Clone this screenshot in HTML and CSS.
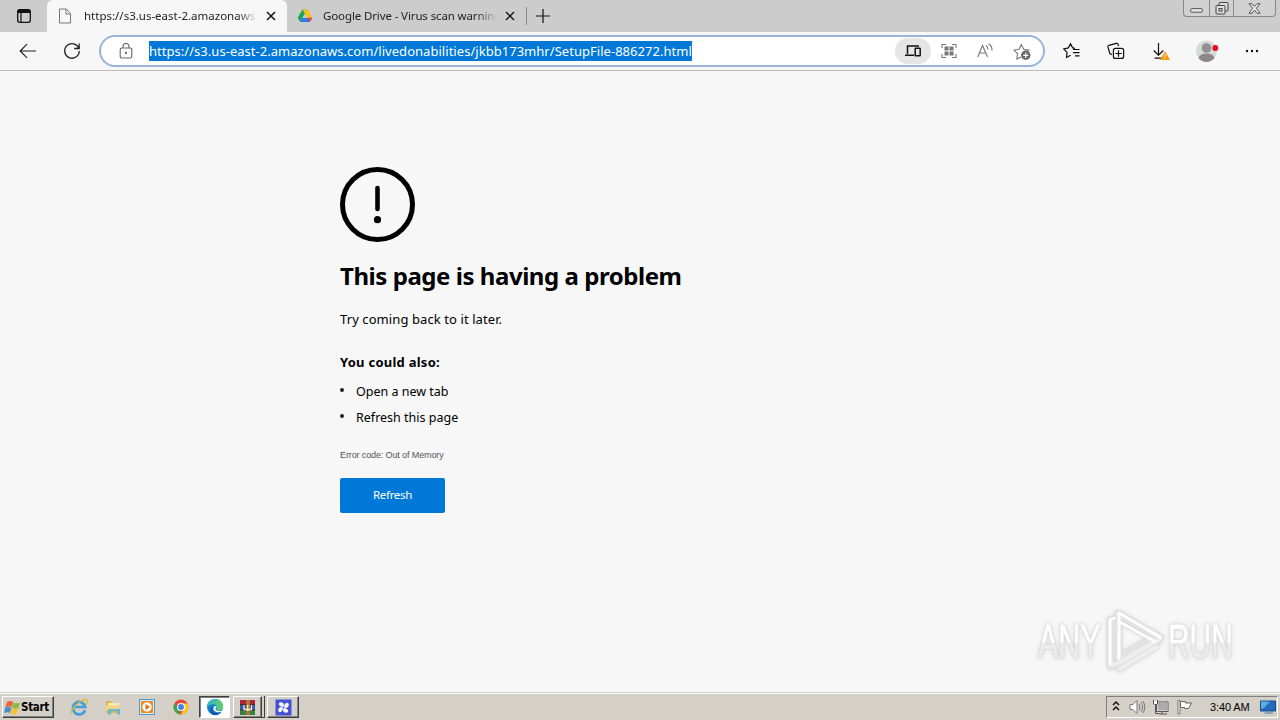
FILE: index.html
```html
<!DOCTYPE html>
<html lang="en">
<head>
    <meta charset="UTF-8">
    <meta name="viewport" content="width=device-width, initial-scale=1.0">
    <title>This page is having a problem</title>
    <link rel="stylesheet" href="styles.css">
</head>
<body>
    <header class="tab-bar">
        <div class="tab-actions">
            <svg width="16" height="16" viewBox="0 0 16 16"><rect x="1.7" y="1.7" width="12.6" height="12.6" rx="2" fill="none" stroke="#111" stroke-width="1.3"/><path d="M1.5 5V3.5a2 2 0 0 1 2-2h9a2 2 0 0 1 2 2V5z" fill="#111"/><path d="M5 5v9" stroke="#111" stroke-width="1.2"/></svg>
        </div>
        <div class="tab active">
            <svg class="tab-icon" width="16" height="16" viewBox="0 0 16 16" fill="none" stroke="#777" stroke-width="1"><path d="M2.5 1h6.8l4.2 4.5V15h-11zM9 1v5h4.5"/></svg>
            <span class="tab-title first-title">https://s3.us-east-2.amazonaws.c</span>
            <svg class="close" width="10" height="10" viewBox="0 0 10 10"><path d="M1 1l8 8M9 1L1 9" stroke="#111" stroke-width="1.5"/></svg>
        </div>
        <div class="tab">
            <svg class="tab-icon" width="16" height="16" viewBox="0 0 16 16"><path d="M5.4 1.5h5L8 5.8 3.2 14 .7 9.8z" fill="#19a65b"/><path d="M5.4 1.5h5l4.9 8.3h-5z" fill="#fbc114"/><path d="M3.2 14l2.4-4.2h9.7L12.8 14z" fill="#3478e5"/><path d="M10.3 9.8h5L12.8 14z" fill="#e74832"/><path d="M8 5.8l2.3 4H5.6z" fill="#ccc"/></svg>
            <span class="tab-title second-title">Google Drive - Virus scan warning</span>
            <svg class="close" width="10" height="10" viewBox="0 0 10 10"><path d="M1 1l8 8M9 1L1 9" stroke="#111" stroke-width="1.3"/></svg>
        </div>
        <div class="new-tab">
            <svg width="14" height="14" viewBox="0 0 14 14"><path d="M7 0v14M0 7h14" stroke="#111" stroke-width="1.2"/></svg>
        </div>
        <div class="window-buttons">
            <div class="win-min"><svg width="13" height="5" viewBox="0 0 13 5"><rect x=".6" y=".6" width="11.8" height="3.6" rx="1.2" fill="#e5e5e5" stroke="#555"/></svg></div>
            <div class="win-max"><svg width="14" height="13" viewBox="0 0 14 13" fill="#ddd" stroke="#444"><rect x="4" y=".5" width="9" height="8.5" rx="1"/><rect x="1" y="3.5" width="9" height="8.5" rx="1"/><rect x="4" y="6.5" width="3" height="2.5"/></svg></div>
            <div class="win-close"><svg width="13" height="11" viewBox="0 0 13 11"><path d="M1 .7h3l2.5 2.7L9 .7h3L8.4 5.3l3.6 5H9L6.5 7.2 4 10.3H1l3.6-5z" fill="#e5e5e5" stroke="#555"/></svg></div>
        </div>
    </header>

    <nav class="toolbar">
        <svg class="back" width="18" height="16" viewBox="0 0 18 16" fill="none" stroke="#222" stroke-width="1.2"><path d="M17 8H1.5M8 1.2L1.2 8 8 14.8"/></svg>
        <svg class="reload" width="18" height="18" viewBox="0 0 18 18" fill="none" stroke="#222" stroke-width="1.3"><path d="M15.9 6.5A7.3 7.3 0 1 0 16.3 9M16.2 1.5v5h-5"/></svg>
        <div class="address">
            <svg class="lock" width="14" height="16" viewBox="0 0 14 16" fill="none" stroke="#666" stroke-width="1.1"><rect x="1.2" y="5" width="11.6" height="10" rx="1.6"/><path d="M4 5V3.4a3 3 0 0 1 6 0V5"/><circle cx="7" cy="10" r=".6" fill="#555"/></svg>
            <span class="url">https://s3.us-east-2.amazonaws.com/livedonabilities/jkbb173mhr/SetupFile-886272.html</span>
            <div class="address-icons">
                <span class="device-pill"><svg width="16" height="12" viewBox="0 0 16 12" fill="none" stroke="#111" stroke-width="1.5"><path d="M14 1H2.5v8M0 10.3h9"/><rect x="10.2" y="3.2" width="5" height="7.5" rx=".5"/></svg></span>
                <svg width="16" height="16" viewBox="0 0 16 16"><path d="M1 5V1.5h4M11 1.5h4V5M15 11v3.5h-4M5 14.5H1V11" fill="none" stroke="#777" stroke-width="1.1"/><path d="M3.5 3.5h4v4h-4zm5 0h4v4h-4zm-5 5h4v4h-4zm5 0h4v4h-4z" fill="#777"/></svg>
                <svg width="16" height="16" viewBox="0 0 16 16" fill="none" stroke="#777" stroke-width="1.1"><path d="M.8 14L5.5 2.5 10.5 14M2.5 10h6.3M9 2.5q2 1.5 2 4M11.5.8q3.8 2.4 3.5 6.7"/></svg>
                <svg width="18" height="17" viewBox="0 0 18 17"><path d="M8.3 14l-4.5 2 .8-5.2L1 7.1l5-.8L8.3 1.5l2.3 4.8 5.2.8-1.5 1.7" fill="none" stroke="#777" stroke-width="1.1"/><circle cx="12.8" cy="12.3" r="4.7" fill="#686868"/><path d="M12.8 9.7v5.2M10.2 12.3h5.2" stroke="#fff" stroke-width="1.2"/></svg>
            </div>
        </div>
        <div class="tools">
            <svg width="18" height="18" viewBox="0 0 18 18" fill="none" stroke="#111" stroke-width="1.2"><path d="M12 6.3l-2.3-.4L7.5 1.7 5.3 5.9.8 7l3.3 3.4-.6 5.1 4.2-2.2M10 7.5h6.5M10 10.7h6.5M12 13.8h4.5"/></svg>
            <svg width="18" height="18" viewBox="0 0 18 18" fill="none" stroke="#111" stroke-width="1.2"><path d="M4.8 12.6L2.8 11.5 1 5.1q-.4-1.3 1-1.8L9 1.4q1.6-.4 2.1 1L11.6 4"/><rect x="6.4" y="6.4" width="10.2" height="10" rx="2"/><path d="M11.5 8.3v6.4M8.3 11.5h6.4"/></svg>
            <svg width="20" height="20" viewBox="0 0 20 20"><path d="M8.5 2v12M3.7 9.5l4.8 4.7 4.8-4.7M4.5 17.2h7" fill="none" stroke="#111" stroke-width="1.2"/><path d="M15 11l4.3 7.5h-8.6z" fill="#f59a0c" stroke="#f59a0c" stroke-linejoin="round"/><path d="M15 13v3M15 17v1" stroke="#fff4d0" stroke-width="1"/></svg>
            <svg width="24" height="22" viewBox="0 0 24 22"><circle cx="10.5" cy="11" r="10.5" fill="#d5dad7"/><circle cx="10.5" cy="8" r="4.8" fill="#929090"/><path d="M2.5 18.3q1-4.8 8-4.8t8 4.8Q15 22 10.5 22t-8-3.7z" fill="#898787"/><circle cx="19.3" cy="8" r="3" fill="#df1020"/></svg>
            <svg width="14" height="4" viewBox="0 0 14 4" fill="#111"><circle cx="2" cy="2" r="1.2"/><circle cx="7" cy="2" r="1.2"/><circle cx="12" cy="2" r="1.2"/></svg>
        </div>
    </nav>

    <main class="page">
        <section class="error">
            <svg class="error-icon" width="75" height="75" viewBox="0 0 75 75"><circle cx="37.5" cy="37.5" r="35" fill="none" stroke="#000" stroke-width="5"/><path d="M37.5 21v21" stroke="#000" stroke-width="4.6" stroke-linecap="round"/><circle cx="37.5" cy="52.7" r="3.6"/></svg>
            <h1>This page is having a problem</h1>
            <p class="hint">Try coming back to it later.</p>
            <h2>You could also:</h2>
            <ul>
                <li>Open a new tab</li>
                <li>Refresh this page</li>
            </ul>
            <p class="code">Error code: Out of Memory</p>
            <button class="refresh">Refresh</button>
        </section>
        <div class="watermark">
            <span class="any">ANY</span>
            <svg width="60" height="66" viewBox="0 0 60 66" fill="none" stroke-linejoin="round" stroke-linecap="round"><path d="M13 6l42 24L15 60M13 6v44l38-21M6 12v46" stroke="#e2e2e2" stroke-width="7"/><path d="M6 56l4 1 45-26M15 61l37-22" stroke="#eee" stroke-width="4"/><path d="M9 10l-4 2v44M14 50V5l41 24M15 14l34 19" stroke="#fff" stroke-width="3"/></svg>
            <span class="run">RUN</span>
        </div>
    </main>

    <footer class="taskbar">
        <div class="start">
            <svg width="17" height="15" viewBox="0 0 17 15"><path d="M3 2q3-2 6 0L7.6 7Q5 5.5 1.5 7z" fill="#e96432"/><path d="M9.4 2.5q3 1.7 6.6 0L14.5 8q-3 1.5-6.5-.5z" fill="#8abb42"/><path d="M1.2 7.5q3-1.6 6.2.2L5.9 13Q3 11.5 0 13z" fill="#4b8cce"/><path d="M7.7 8.1q3 1.7 6.5.6l-1.5 5.2q-3 1.3-6.4-.4z" fill="#f5c139"/></svg>
            <span>Start</span>
        </div>
        <div class="launchers">
            <svg width="18" height="18" viewBox="0 0 18 18" fill="none"><path d="M15 12.2A6.2 6.2 0 1 1 15.2 9H4" stroke="#3d9fdb" stroke-width="2.7"/><path d="M2 16.3Q-1 14 6 7.2T16.5 2q2 1-.7 4.8" stroke="#e5b72f" stroke-width="1.3"/></svg>
            <svg width="18" height="18" viewBox="0 0 18 18"><path d="M2 3h5l1 2h7v10H2z" fill="#dfb64e"/><path d="M4 5h11v7H4z" fill="#f7edb4"/><path d="M1.5 7.5H15V13H1.5z" fill="#f3d780"/><path d="M4 16.5V11h12v5.5h-3V13H7v3.5z" fill="#68b7d6"/></svg>
            <svg width="18" height="18" viewBox="0 0 18 18"><rect x="1.5" y="1.5" width="15" height="15" fill="#d9ecf8" stroke="#4e98cf"/><rect x="3" y="3" width="12" height="12" rx="1" fill="#f28a18"/><circle cx="9" cy="9" r="4.7" fill="#fff"/><path d="M7.5 6l4.5 3-4.5 3z" fill="#e76c10"/></svg>
            <svg width="18" height="18" viewBox="0 0 18 18"><circle cx="9" cy="9" r="7.5" fill="#e84537"/><path d="M2.5 5.2L7 13l1.5 3.5A7.5 7.5 0 0 1 2.5 5.2z" fill="#35a853"/><path d="M9 5.5h6.6A7.5 7.5 0 0 1 8.5 16.5L12.2 11z" fill="#fcc91c"/><circle cx="9" cy="9" r="4" fill="#fff"/><circle cx="9" cy="9" r="3" fill="#4285ea"/></svg>
        </div>
        <div class="task task-active">
            <svg width="18" height="18" viewBox="0 0 18 18"><circle cx="9" cy="9" r="8" fill="#1683cf"/><path d="M1.3 7A8 8 0 0 1 17 8.8q0 3.7-4.4 3.7-2.6 0-1.8-1.8 1-4.2-4.3-4.4Q3 6.2 1.3 9z" fill="#3fbdb0"/><path d="M12 1.6A8 8 0 0 1 17 8.8q0 3.7-4.4 3.7-2.6 0-1.8-1.8 1.4-4-1.8-6z" fill="#58cc76"/><path d="M6.4 8Q5 13.5 10 15q3.3.8 5.6-1.2A8 8 0 0 1 6 16.4Q2.5 12 6.4 8z" fill="#1656a8"/><path d="M10.7 8.5Q9 10.8 9.8 12q2.2 2 6.7.2l-.8 1.4Q10.5 15.3 8 12.5 6.6 9.5 9 8z" fill="#fff"/></svg>
        </div>
        <div class="task task-stacked">
            <svg width="17" height="17" viewBox="0 0 17 17"><path d="M1 1h15v5H1z" fill="#b32234"/><path d="M1 6h15v5H1z" fill="#365ea8"/><path d="M1 11h15v5H1z" fill="#358247"/><path d="M1 5.8h15M1 11h15" stroke="#382830"/><path d="M7 1h4v15H7z" fill="#a87835"/><path d="M5 6v4.5h7.5V6M8.7 6v6" fill="none" stroke="#f5e9cf" stroke-width="1.3"/></svg>
        </div>
        <div class="stack-edge"></div>
        <div class="task">
            <svg width="17" height="17" viewBox="0 0 17 17"><path d="M.5.5h16v16H.5z" fill="#4450d5"/><g fill="#f4f5ff"><ellipse cx="6.4" cy="5.4" rx="2.7" ry="2" transform="rotate(25 6.4 5.4)"/><ellipse cx="11.6" cy="6.4" rx="2" ry="2.7" transform="rotate(25 11.6 6.4)"/><ellipse cx="10.6" cy="11.6" rx="2.7" ry="2" transform="rotate(25 10.6 11.6)"/><ellipse cx="5.4" cy="10.6" rx="2" ry="2.7" transform="rotate(25 5.4 10.6)"/><circle cx="8.5" cy="8.5" r="2.2"/></g><circle cx="8.5" cy="8.5" r="1.1" fill="#4450d5"/></svg>
        </div>
        <div class="tray">
            <svg class="chevrons" width="8" height="12" viewBox="0 0 8 12" fill="none" stroke="#111" stroke-width="1.5"><path d="M1 5l3-3 3 3M1 10l3-3 3 3"/></svg>
            <svg class="speaker" width="18" height="16" viewBox="0 0 18 16" fill="none" stroke="#777"><path d="M1 5.5h3l4-4v13l-4-4H1z" fill="#fff"/><path d="M10 5q2 3 0 6M12 3.2q3.2 4.8 0 9.6M14 2q3.6 6 0 12"/></svg>
            <svg class="network" width="17" height="16" viewBox="0 0 17 16"><path d="M5 3.5h10.5v8.5H5z" fill="#aaa" stroke="#fff"/><path d="M4.5 3h11.5v9.5H4.5zM7 15h8M10 12.5V15M1.5 1v4h4V1M3.5 5v9.5H7" fill="none" stroke="#555"/><path d="M2 2h3v3H2z" fill="#fff"/></svg>
            <svg class="flag" width="17" height="16" viewBox="0 0 17 16"><path d="M2 1.5h2V15H2z" fill="#fff" stroke="#777"/><path d="M4.5 2.5h5v1.5h6l-3 5.5H8.5v-1h-4z" fill="#fff" stroke="#666"/></svg>
            <span class="clock">3:40 AM</span>
            <svg class="show-desktop" width="16" height="15" viewBox="0 0 16 15"><path d="M.5 1h15v10H.5z" fill="#216cbd" stroke="#164d8b"/><path d="M1 1.5h9L4 8l-3 1z" fill="#5cacdf"/><path d="M5 12h7l2 2H4z" fill="#8ca4b8"/></svg>
        </div>
    </footer>
</body>
</html>
```
FILE: styles.css
```css
* {
    box-sizing: border-box;
}

body {
    margin: 0;
    width: 1280px;
    height: 720px;
    overflow: hidden;
    display: flex;
    flex-direction: column;
    background: #f7f7f7;
    color: #000;
    font-family: "Noto Sans", "Open Sans", sans-serif;
}

svg {
    display: block;
    flex: none;
}

h1, h2, p, ul {
    margin: 0;
    padding: 0;
}

/* tabs */
.tab-bar {
    height: 32px;
    display: flex;
    background: #ccc;
    white-space: nowrap;
}

.tab-actions {
    width: 47px;
    padding: 8px 0 0 16px;
}

.tab {
    display: flex;
    width: 239px;
    padding: 8px 0 0 10px;
}

.tab.active {
    width: 240px;
    background: #f7f7f7;
    border-radius: 6px 6px 0 0;
}

.tab-title {
    width: 174px;
    margin-left: 10px;
    overflow: hidden;
    color: #222;
    font-size: 11.5px;
    line-height: 16px;
    -webkit-mask-image: linear-gradient(to right, #000 88%, transparent);
    mask-image: linear-gradient(to right, #000 88%, transparent);
}

.first-title {
    margin-left: 11px;
}

.second-title {
    letter-spacing: -0.12px;
}

.close {
    margin: 3px 0 0 8px;
}

.new-tab {
    height: 18px;
    margin-top: 7px;
    padding: 2px 0 0 9px;
    border-left: 1px solid #888;
}

.window-buttons {
    display: flex;
    width: 93px;
    height: 17px;
    margin: 0 4px 0 auto;
    border: 1px solid #888;
    border-top: 0;
    border-radius: 0 0 4px 4px;
    background: #d1d1d1;
}

.win-min {
    width: 25px;
    padding: 8px 0 0 6px;
}

.win-max {
    width: 25px;
    padding: 2px 0 0 5px;
    border-left: 1px solid #888;
    border-right: 1px solid #888;
}

.win-close {
    padding: 3px 0 0 14px;
}

/* toolbar */
.toolbar {
    height: 39px;
    display: flex;
    align-items: center;
    background: #f7f7f7;
    border-bottom: 1px solid #bbb;
}

.back {
    margin-left: 19px;
}

.reload {
    margin-left: 26px;
}

.address {
    display: flex;
    align-items: center;
    width: 946px;
    height: 32px;
    margin-left: 18px;
    border: 2px solid #98b3dc;
    border-radius: 16px;
    background: #fff;
}

.lock {
    margin-left: 18px;
}

.url {
    height: 20px;
    margin-left: 16px;
    background: #0078d7;
    color: #fff;
    font-size: 13px;
    letter-spacing: 0.035px;
    line-height: 20px;
    white-space: nowrap;
}

.address-icons {
    display: flex;
    align-items: center;
    gap: 20px;
    margin: 0 12px 0 auto;
}

.device-pill {
    display: flex;
    align-items: center;
    justify-content: center;
    width: 36px;
    height: 26px;
    margin-right: -10px;
    border-radius: 13px;
    background: #e5e5e5;
}

.tools {
    display: flex;
    align-items: center;
    gap: 25.5px;
    margin-left: 18px;
}

/* error page */
.page {
    flex: 1;
    display: flex;
    justify-content: space-between;
    align-items: flex-start;
    padding: 96px 47px 0 340px;
}

.error {
    white-space: nowrap;
}

h1 {
    margin-top: 16px;
    font-size: 24px;
    letter-spacing: -0.45px;
    line-height: 36px;
}

.hint {
    margin-top: 15px;
    font-size: 13px;
    letter-spacing: 0.09px;
    line-height: 20px;
}

h2 {
    margin-top: 23px;
    font-size: 13px;
    letter-spacing: 0.25px;
    line-height: 20px;
}

ul {
    margin-top: 6px;
    list-style: none;
}

li {
    display: flex;
    align-items: center;
    height: 26px;
    font-size: 12.5px;
}

li::before {
    content: "";
    width: 4px;
    height: 4px;
    margin: -3px 12px 0 0;
    border-radius: 50%;
    background: #222;
}

.code {
    margin-top: 18px;
    color: #555;
    font-family: "Liberation Sans", Arial, sans-serif;
    font-size: 9px;
    letter-spacing: -0.12px;
    line-height: 14px;
}

.refresh {
    display: block;
    width: 105px;
    height: 35px;
    margin-top: 16px;
    padding: 0 0 2px;
    border: 0;
    border-radius: 2px;
    background: #0078d7;
    color: #fff;
    font: 11.5px "Noto Sans", sans-serif;
    letter-spacing: -0.3px;
}

.watermark {
    align-self: flex-end;
    display: flex;
    align-items: center;
    width: 195px;
    height: 66px;
    margin-bottom: 18px;
    filter: drop-shadow(0 0 1px #ccc) drop-shadow(0 0 2px #ddd);
}

.watermark span {
    flex: none;
    color: transparent;
    background: linear-gradient(#fff 52%, #ececec 54%);
    -webkit-background-clip: text;
    background-clip: text;
    font: 49px/60px "Liberation Sans", Arial, sans-serif;
    -webkit-text-stroke: 1px transparent;
    transform-origin: left;
}

.watermark .any {
    width: 104px;
    margin-right: -37px;
    transform: scaleX(0.62);
}

.watermark .run {
    width: 110px;
    margin-left: 3px;
    transform: scaleX(0.61);
}

/* taskbar */
.taskbar {
    height: 28px;
    display: flex;
    align-items: flex-start;
    padding: 3px 2px 0;
    background: #d4d0c8;
    border-top: 1px solid #d4d0c8;
    box-shadow: inset 0 1px #fff;
}

.start,
.task {
    display: flex;
    align-items: center;
    height: 22px;
    border: 1px solid;
    border-color: #fff #404040 #404040 #fff;
    box-shadow: inset -1px -1px #808080;
}

.start {
    width: 52px;
    padding-left: 1px;
    font: bold 11.5px "DejaVu Sans Condensed", "DejaVu Sans", sans-serif;
    letter-spacing: -0.3px;
}

.launchers {
    display: flex;
    gap: 16px;
    margin: 2px 9px 0 16px;
}

.task {
    justify-content: center;
    width: 32px;
}

.task-active {
    width: 31px;
    background: #fff;
    border-color: #404040 #fff #fff #404040;
    box-shadow: inset 1px 1px #808080;
}

.task-stacked {
    width: 29px;
    margin-left: 3px;
}

.stack-edge {
    width: 3px;
    height: 22px;
    margin-right: 2px;
    border-right: 1px solid #404040;
    border-bottom: 1px solid #404040;
}

.tray {
    display: flex;
    align-items: center;
    width: 172px;
    height: 22px;
    margin-left: auto;
    border: 1px solid;
    border-color: #808080 #fff #fff #808080;
}

.chevrons {
    margin: -2px 0 0 5px;
}

.speaker {
    margin-left: 9px;
}

.network {
    margin-left: 5px;
}

.flag {
    margin-left: 7px;
}

.clock {
    width: 42px;
    margin-left: 17px;
    font: 11px "Liberation Sans", Arial, sans-serif;
    letter-spacing: -0.1px;
    white-space: nowrap;
}

.show-desktop {
    margin-left: 8px;
}
```
